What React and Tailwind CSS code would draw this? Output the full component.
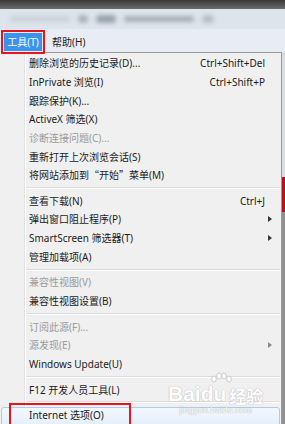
const items = [
  { t: '删除浏览的历史记录(D)...', k: 'Ctrl+Shift+Del' },
  { t: 'InPrivate 浏览(I)', k: 'Ctrl+Shift+P' },
  { t: '跟踪保护(K)...' },
  { t: 'ActiveX 筛选(X)' },
  { t: '诊断连接问题(C)...', off: true },
  { t: '重新打开上次浏览会话(S)' },
  { t: 'quote' },
  'sep',
  { t: '查看下载(N)', k: 'Ctrl+J' },
  { t: '弹出窗口阻止程序(P)', sub: true },
  { t: 'SmartScreen 筛选器(T)', sub: true },
  { t: '管理加载项(A)' },
  'sep',
  { t: '兼容性视图(V)', off: true },
  { t: '兼容性视图设置(B)' },
  'sep',
  { t: '订阅此源(F)...', off: true },
  { t: '源发现(E)', off: true, sub: true },
  { t: 'Windows Update(U)' },
  'sep',
  { t: 'F12 开发人员工具(L)' },
  'sep',
  { t: 'Internet 选项(O)', hot: true },
];

const Label = ({ t }) =>
  t === 'quote' ? (
    <span>
      将网站添加到<span className="font-['Noto_Sans_CJK_SC',sans-serif]">“开始”</span>菜单(M)
    </span>
  ) : (
    <span>{t}</span>
  );

const MenuRow = ({ item }) => (
  <div className="relative h-[18.65px] flex items-center pl-[3px] pr-[9px]">
    {item.hot && (
      <div className="absolute -left-[25px] right-[1px] top-[1px] -bottom-[3px] rounded-[3px] border border-[#a9cdf0] bg-gradient-to-b from-[#f3f8fe] to-[#e3eefb]"></div>
    )}
    <div className={`relative flex-1 whitespace-nowrap ${item.off ? 'text-[#9b9b9b]' : 'text-[#1b1b1b]'}`}>
      <Label t={item.t} />
    </div>
    {item.k && <div className="relative pr-[7px] text-[#1b1b1b] whitespace-nowrap">{item.k}</div>}
    {item.sub && (
      <div
        className={`w-0 h-0 border-y-[3px] border-y-transparent border-l-[4px] ${
          item.off ? 'border-l-[#8a8a8a]' : 'border-l-[#333333]'
        }`}
      ></div>
    )}
  </div>
);

const Separator = () => (
  <div className="h-[7px] flex flex-col justify-center pr-[1px]">
    <div className="border-t border-[#dcdcdc]"></div>
    <div className="border-t border-white"></div>
  </div>
);

export default function App() {
  return (
    <div className="relative w-[285px] h-[424px] overflow-hidden bg-[#f0f0f0] font-['Noto_Sans','Noto_Sans_CJK_SC',sans-serif] text-[10px] leading-none">
      {/* title strip */}
      <div className="h-[9px] bg-gradient-to-b from-[#3a3a3a] to-[#6b6b6b]"></div>

      {/* blurred toolbar */}
      <div className="h-[20px] bg-[#dde4ec] flex items-center gap-[8px] px-[10px] overflow-hidden">
        <div className="w-[60px] h-[6px] rounded bg-[#c9d1da] blur-[2px]"></div>
        <div className="w-[10px] h-[8px] rounded bg-[#aab2bc] blur-[2px]"></div>
        <div className="w-[20px] h-[8px] rounded bg-[#9aa3ad] blur-[2px]"></div>
        <div className="w-[70px] h-[6px] rounded bg-[#a7afb8] blur-[2px]"></div>
        <div className="w-[12px] h-[8px] rounded bg-[#b5bdc6] blur-[2px]"></div>
      </div>

      {/* menu bar */}
      <div className="h-[23px] bg-[#e8edf5] flex items-center">
        <div className="ml-[4px] mt-[3px] h-[18px] w-[38px] bg-[#3b93ee] text-white flex items-center justify-center">
          工具(T)
        </div>
        <div className="ml-[10px] mt-[3px] text-[#1b1b1b]">帮助(H)</div>
      </div>

      {/* dropdown */}
      <div className="flex">
        <div className="w-[25px] border-r border-[#e2e3e3]"></div>
        <div className="w-[1px] bg-white"></div>
        <div className="flex-1 border-t border-r border-[#9a9a9a] pt-[1px] h-[380px]">
          {items.map((item, i) => (item === 'sep' ? <Separator key={i} /> : <MenuRow key={i} item={item} />))}
        </div>
        <div className="w-[3px] flex flex-col">
          <div className="h-[125px] bg-[#d9dde2]"></div>
          <div className="h-[35px] bg-[#b5121b]"></div>
          <div className="flex-1 bg-[#8f8f8f]"></div>
        </div>
      </div>

      {/* red annotation boxes */}
      <div className="absolute left-[1px] top-[30px] w-[44px] h-[24px] border-2 border-[#e8141a]"></div>
      <div className="absolute left-[9px] top-[403px] w-[122px] h-[24px] border-2 border-[#e8141a]"></div>

      {/* watermark */}
      <div className="absolute left-[168px] top-[372px] flex flex-col items-center text-white [text-shadow:0_0_1px_#b4b4b4,0_0_1px_#b4b4b4] pointer-events-none">
        <svg width="24" height="11" viewBox="0 0 24 11" className="ml-[10px]">
          <g fill="#fff" stroke="#bdbdbd" strokeWidth="0.8">
            <ellipse cx="5" cy="7" rx="2.3" ry="3" />
            <ellipse cx="10" cy="4" rx="2.3" ry="3" />
            <ellipse cx="15" cy="4" rx="2.3" ry="3" />
            <ellipse cx="20" cy="7" rx="2.3" ry="3" />
          </g>
        </svg>
        <div className="flex items-end font-['Liberation_Sans',sans-serif] font-bold text-[21px] leading-none">
          <span>Bai</span>
          <span>du</span>
          <span className="ml-[3px] text-[17px] font-['Noto_Sans_CJK_SC',sans-serif]">经验</span>
        </div>
        <div className="text-[9px] mt-[2px] font-['Liberation_Sans',sans-serif]">jingyan.baidu.com</div>
      </div>
    </div>
  );
}
